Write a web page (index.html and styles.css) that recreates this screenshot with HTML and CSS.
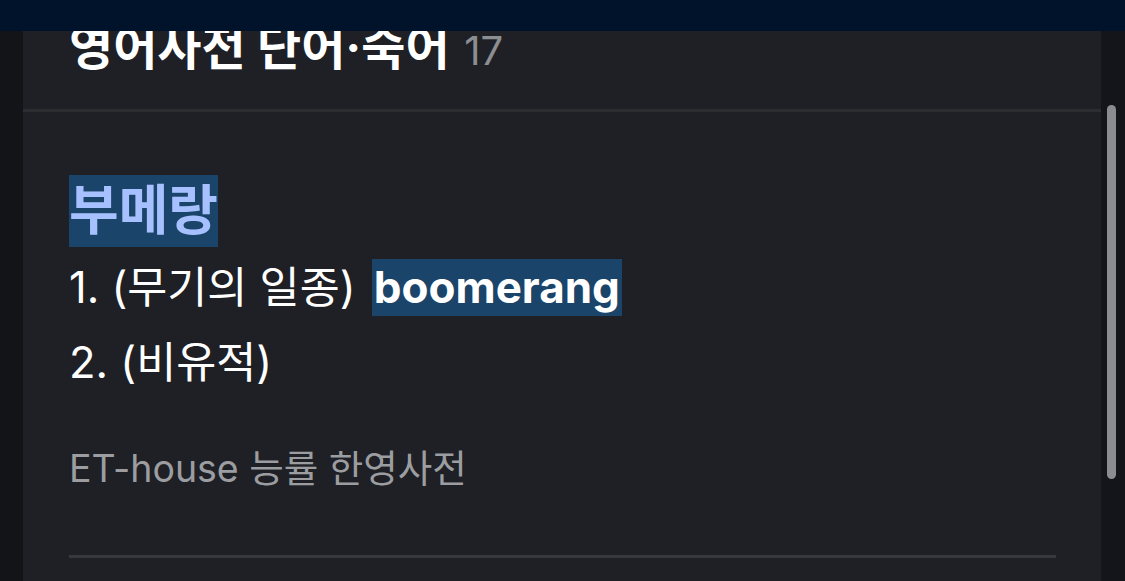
FILE: index.html
```html
<!DOCTYPE html>
<html lang="ko">

<head>
  <meta charset="UTF-8">
  <meta name="viewport" content="width=device-width, initial-scale=1.0">
  <title>영어사전 단어·숙어</title>

  <link rel="stylesheet" href="styles.css">
</head>

<body>
  <div class="top-bar"></div>

  <div class="main">
    <div class="gutter-left"></div>

    <div class="panel">
      <div class="title-row">
        <span class="title">영어사전 단어·숙어</span>
        <span class="count">17</span>
      </div>

      <div class="entry">
        <div class="word-line"><span class="word">부메랑</span></div>

        <div class="def-line">1. (무기의 일종) <span class="hit">boomerang</span></div>
        <div class="def-line">2. (비유적)</div>

        <div class="source">ET-house 능률 한영사전</div>

        <div class="divider"></div>
      </div>
    </div>

    <div class="gutter-right">
      <div class="scroll-thumb"></div>
    </div>
  </div>
</body>

</html>
```

FILE: styles.css
```css
body {
  margin: 0;
  height: 581px;
  overflow: hidden;
  background-color: #121418;
  font-family: "Inter", "Noto Sans CJK KR", sans-serif;
  color: #fff;
}

.top-bar {
  height: 31px;
  background-color: #00132a;
}

.main {
  display: flex;
  height: 550px;
}

.gutter-left {
  width: 23px;
  background-color: #121418;
}

.panel {
  flex: 1;
  background-color: #1e2025;
  overflow: hidden;
}

.gutter-right {
  width: 24px;
  background-color: #13151b;
  padding: 74px 0 0 6px;
  box-sizing: border-box;
}

.scroll-thumb {
  width: 9px;
  height: 374px;
  border-radius: 5px;
  background-color: #8b8c91;
}

/* header, its top is scrolled under the bar */
.title-row {
  height: 78px;
  border-bottom: 3px solid #2b2d31;
  padding-left: 46px;
  line-height: 34px;
  overflow: hidden;
  white-space: nowrap;
}

.title {
  font-size: 48px;
  font-weight: 700;
}

.count {
  margin-left: 10px;
  font-size: 40px;
  color: #8c8e92;
}

.entry {
  padding: 63px 45px 0 46px;
}

.word-line {
  font-size: 54px;
  line-height: 72px;
}

.word {
  display: inline-block;
  background-color: #1a4469;
  color: #a7c0ff;
  font-weight: 700;
}

.def-line {
  font-size: 43.5px;
  line-height: 75px;
}

.word-line + .def-line {
  margin-top: 3px;
}

.hit {
  display: inline-block;
  padding: 0 2px;
  margin-left: 4px;
  font-size: 44px;
  line-height: 57px;
  font-weight: 700;
  background-color: #1a4469;
}

.source {
  margin-top: 44px;
  font-size: 37.5px;
  line-height: 50px;
  color: #9c9da1;
}

.divider {
  margin-top: 61px;
  height: 3px;
  background-color: #36383c;
}
```
